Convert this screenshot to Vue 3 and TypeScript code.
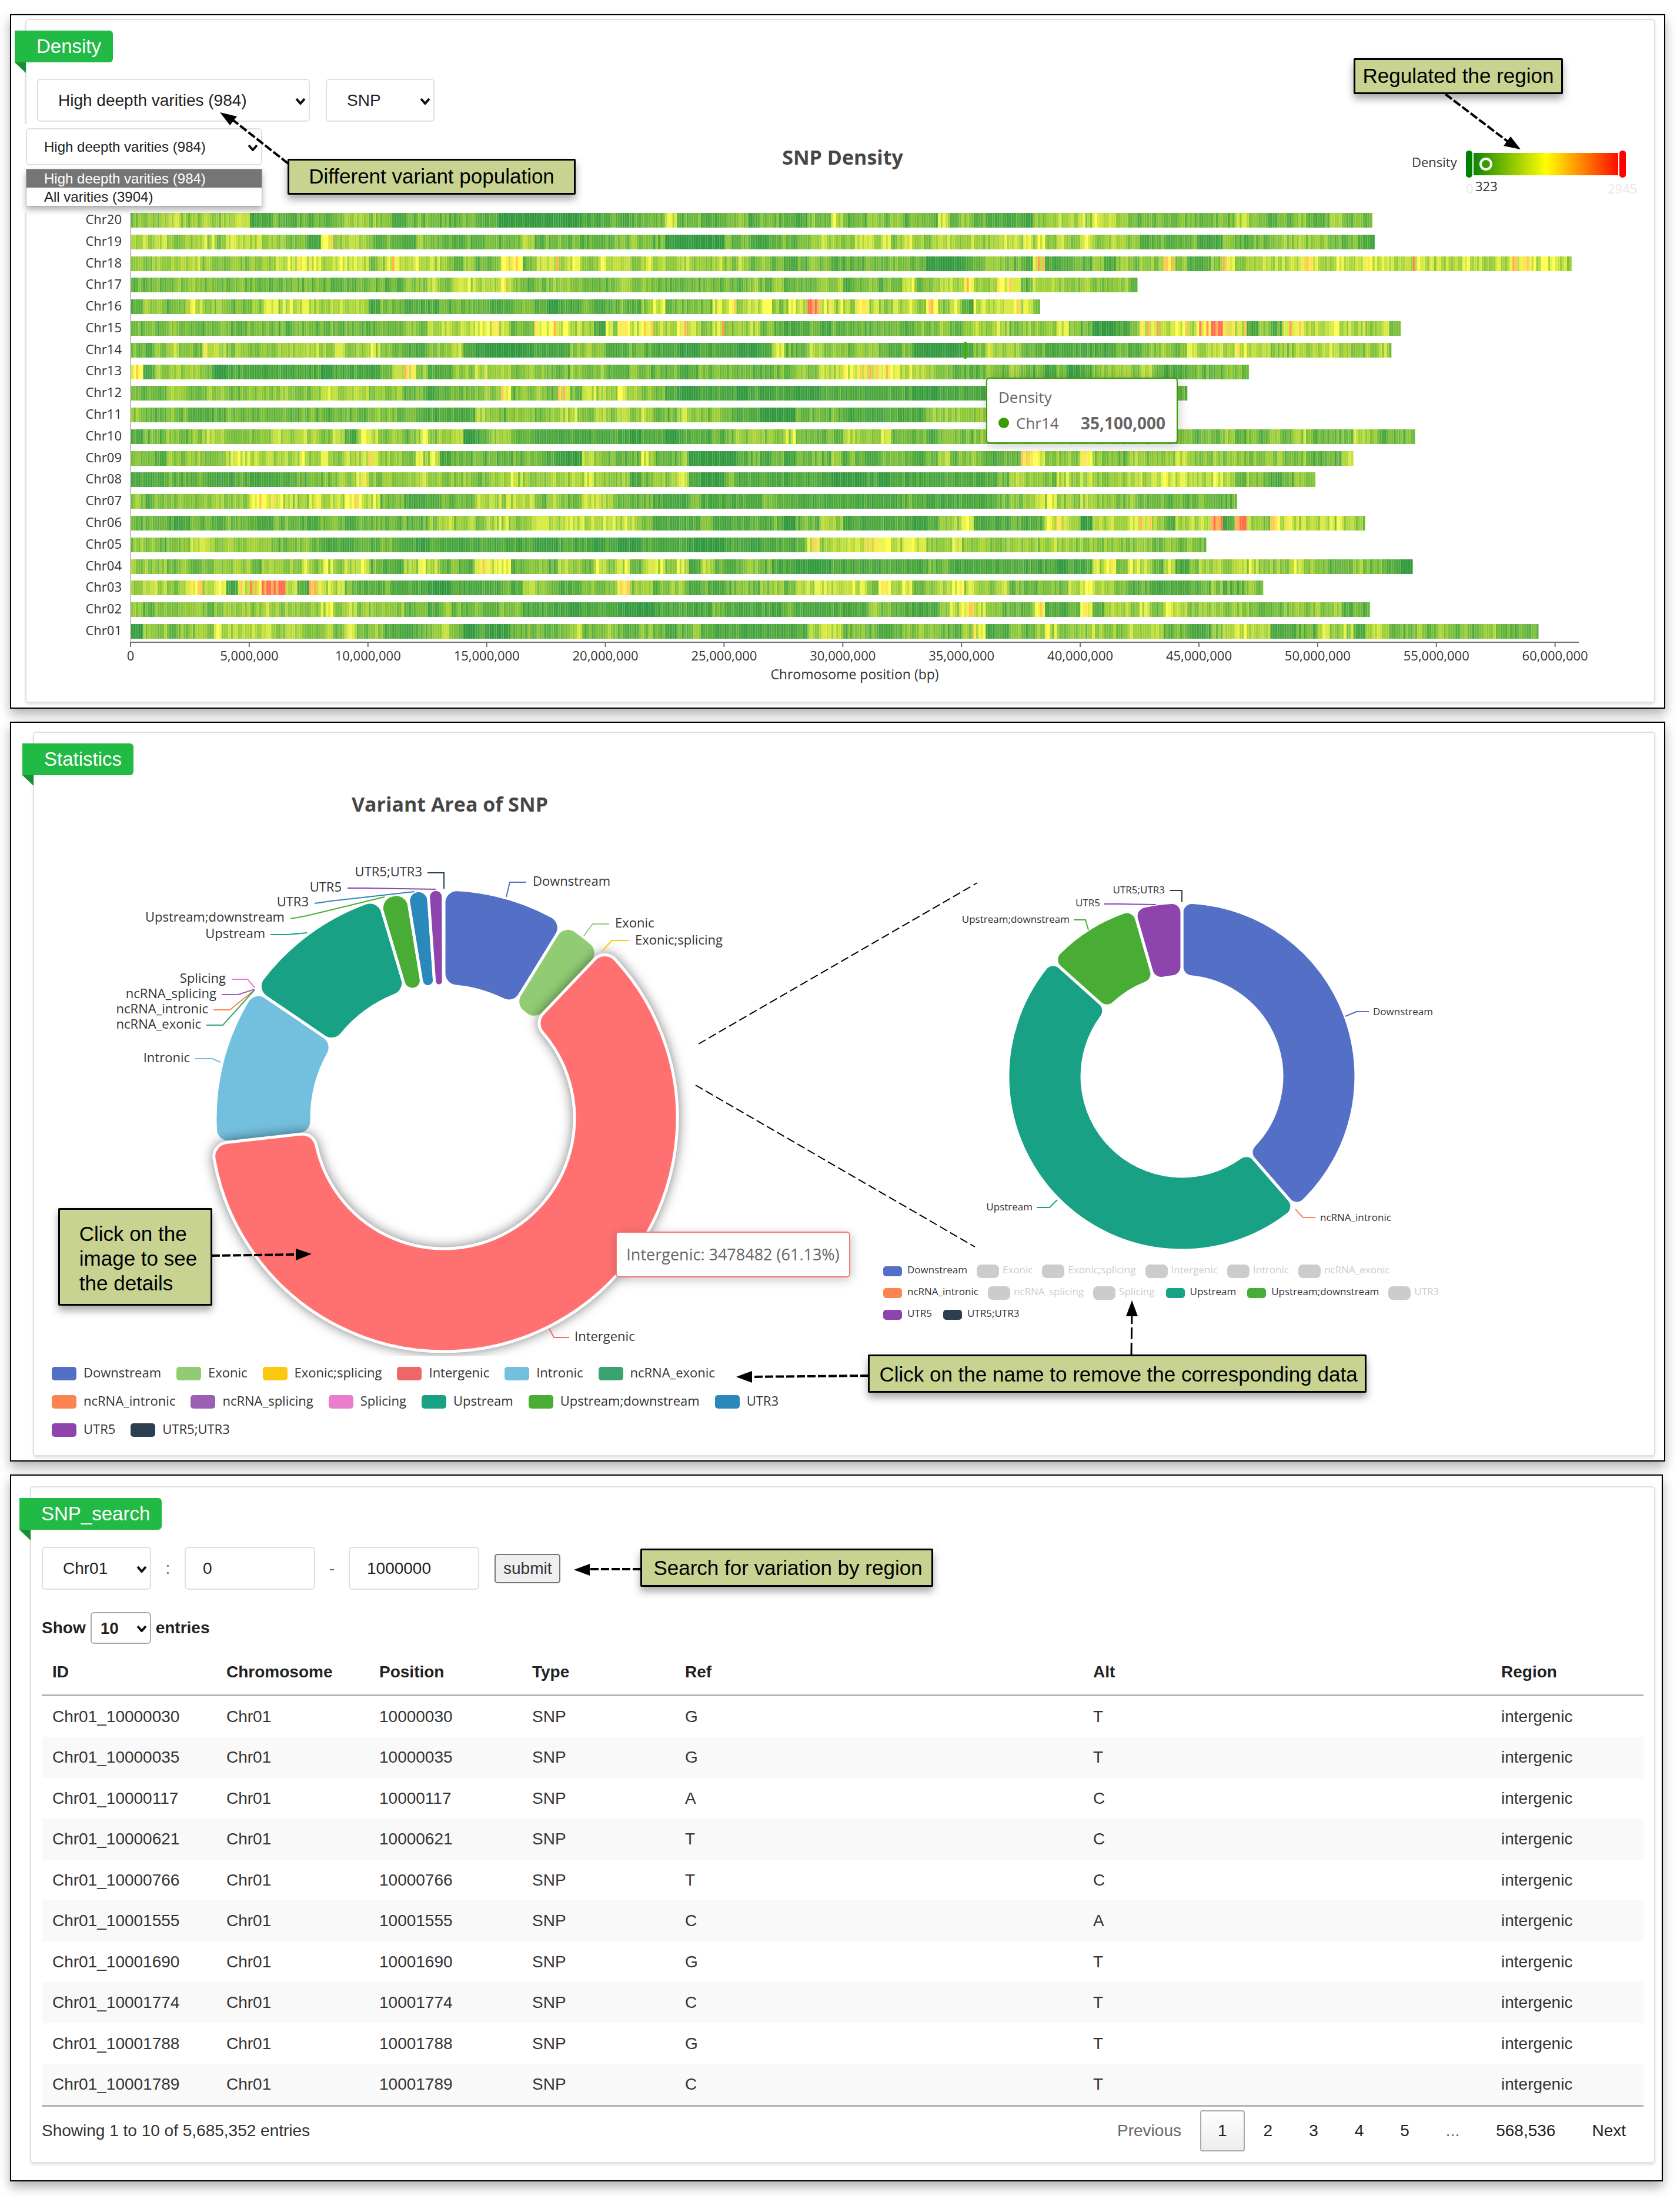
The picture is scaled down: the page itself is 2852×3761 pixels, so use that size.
<script setup lang="ts">
import { ref } from 'vue'

interface Chromosome { name: string; size: number; profile: string }
interface Slice { name: string; color: string; from: number; to: number }
interface Leader { name: string; color: string; points: string; x: number; y: number; side: 'start' | 'end' }
interface LegendItem { name: string; color: string; off?: boolean }

const population = ref('984')
const variant = ref('SNP')
const chromosome = ref('Chr01')
const regionStart = ref('0')
const regionEnd = ref('1000000')
const pageSize = ref('10')

/* One digit per 0.5 Mb window: 0 is sparse (dark green), 9 is dense (red). */
const chromosomes: Chromosome[] = [
  { name: 'Chr20', size: 523, profile: '3334335355 1121222233 3212222221 1000000011 2122252212 2313221325 2232322252 3211113344 5543222222 2225322232 23232' },
  { name: 'Chr19', size: 524, profile: '4443335354 4332216344 2221322122 2234222222 2232200000 2211222343 3645353343 4335455343 5344312122 1132223343 32221' },
  { name: 'Chr18', size: 607, profile: '3333443233 3345674555 3584553232 2662474535 4435434334 3423212322 2222322000 1233228112 2313233731 1373454567 4586654484 5454457656 43' },
  { name: 'Chr17', size: 424, profile: '2222332222 2222222222 2223343455 4632234322 2323222232 2232322233 1232252344 7436624433 43332' },
  { name: 'Chr16', size: 383, profile: '2332363322 3555544434 1321112222 1122101121 2213722225 6546354965 5653553735 1545652' },
  { name: 'Chr15', size: 535, profile: '2223222222 2222222222 2223244455 6522675431 5657447538 3342211212 2222213232 3435233353 2001278465 8976132864 4544343' },
  { name: 'Chr14', size: 531, profile: '2234327433 3333443433 5321133410 0000111333 1122110011 1001522433 2332120000 1343522111 1112123325 4436443344 4533342' },
  { name: 'Chr13', size: 471, profile: '6133332011 1111110111 1247311334 3423322323 2232221223 2222223245 6678654332 2232422120 1334342112 2232' },
  { name: 'Chr12', size: 445, profile: '2223323322 3333335544 3332212223 3623327255 3543210011 1010110011 1111110011 1111112222 222222232' },
  { name: 'Chr11', size: 390, profile: '3223211222 2222222222 3322111114 3233234524 3434224323 2110002222 1111111333 33322222' },
  { name: 'Chr10', size: 541, profile: '1223234333 3343443415 4332533401 3322111111 1101101112 2333352222 4335222132 2322223332 2222223222 2232223252 22243222' },
  { name: 'Chr09', size: 515, profile: '2213333355 4434535344 6332551222 2222210043 2225223000 0121212223 2212221242 3312265333 6332433343 3333333232 224' },
  { name: 'Chr08', size: 499, profile: '1112221112 1111222336 3333433332 3453343453 3312535100 2111111110 0010111111 1112433253 4333445554 4642321232' },
  { name: 'Chr07', size: 466, profile: '3232333333 6655364565 5221112224 4544242244 3222111211 1112211111 1111121111 1112334533 4332322222 222' },
  { name: 'Chr06', size: 520, profile: '2221122122 1122212212 2222234343 4534445555 5543111121 1121202243 1111110135 5111212573 0544574245 5919536644 4543' },
  { name: 'Chr05', size: 453, profile: '3323344343 4322321112 1211011111 1111001110 1001111000 1101112634 5566455335 3333333433 3333332323 2' },
  { name: 'Chr04', size: 540, profile: '3332322333 2333535345 2215542226 7623324325 3525535142 1232110001 1111111221 1111111101 1563642512 4434533353 22232210' },
  { name: 'Chr03', size: 477, profile: '3443565617 8995175521 1211100111 1214321133 3734233121 2323324554 5536352347 5434222324 5432121112 232232' },
  { name: 'Chr02', size: 522, profile: '3233332333 3433335343 3332313222 2231111011 1000111112 1111121111 1132211135 6532226112 6144352543 3433322333 33222' },
  { name: 'Chr01', size: 593, profile: '0332333544 4534334252 3211234201 0022222522 3223212321 1111111454 2321233322 3611323533 3533434221 1345441122 5351442232 323232222' },
]

const ramp: [number, number, number][] = [
  [47, 152, 60], [72, 166, 58], [106, 183, 58], [140, 199, 54], [174, 214, 54],
  [216, 234, 62], [255, 255, 72], [255, 200, 80], [255, 154, 76], [255, 106, 74],
]

function rampColor(level: number): string {
  const clamped = Math.max(0, Math.min(9, level))
  const low = Math.floor(clamped)
  const high = Math.min(9, low + 1)
  const t = clamped - low
  const mix = ramp[low].map((c, i) => Math.round(c + (ramp[high][i] - c) * t))
  return `rgb(${mix.join(',')})`
}

const plotHeight = 730
const barHeight = 25
const barPitch = 699 / 19

function buildBands() {
  let seed = 20
  const random = () => {
    seed = (seed * 1103515245 + 12345) % 2147483648
    return seed / 2147483648
  }
  const bands = new Map<number, string>()
  let seams = ''
  chromosomes.forEach((chr, row) => {
    const levels = chr.profile.replace(/ /g, '')
    const y = Math.round(row * barPitch)
    for (let cell = 0; cell < chr.size; cell++) {
      const base = Number(levels[Math.min(levels.length - 1, Math.floor(cell / 5))])
      const roll = random()
      const wobble = (random() - 0.5) * (base < 2 ? 1 : 2)
      let level = base + wobble
      if (base >= 9) level = roll < 0.65 ? 9 : 7.5
      else if (base >= 7) level = roll < 0.35 ? base + wobble / 2 : 5 + wobble
      else if (base >= 5 && roll < 0.3) level = base - 1.6 + wobble
      const key = Math.round(Math.max(0, Math.min(9, level)) * 2)
      bands.set(key, `${bands.get(key) ?? ''}M${cell} ${y}h1.05v${barHeight}h-1.05z`)
      seams += `M${cell + 0.8} ${y}h.25v${barHeight}h-.25z`
    }
  })
  return { bands: [...bands].map(([key, d]) => ({ d, color: rampColor(key / 2) })), seams }
}
const { bands, seams } = buildBands()

const ticks = Array.from({ length: 13 }, (_, i) => ({
  at: `${(i * 500) / 6.1 / 10}%`,
  label: (i * 5000000).toLocaleString('en-US'),
}))
const chr14Y = Math.round(6 * barPitch)

/* Annular sector with rounded corners, angles in degrees clockwise from twelve o'clock. */
function sector(cx: number, cy: number, inner: number, outer: number, from: number, to: number, radius: number): string {
  const a = (from * Math.PI) / 180
  const b = (to * Math.PI) / 180
  const s = Math.sin(Math.min(Math.PI, b - a) / 2) * 0.999
  const co = Math.min(radius, (outer * s) / (1 + s))
  const ci = s < 0.9 ? Math.min(radius, (inner * s) / (1 - s)) : radius
  const dOut = Math.asin(co / (outer - co))
  const dIn = Math.asin(ci / (inner + ci))
  const rOut = Math.sqrt((outer - co) ** 2 - co ** 2)
  const rIn = Math.sqrt((inner + ci) ** 2 - ci ** 2)
  const at = (r: number, t: number) => `${(cx + r * Math.sin(t)).toFixed(1)} ${(cy - r * Math.cos(t)).toFixed(1)}`
  const bigOut = b - a - 2 * dOut > Math.PI ? 1 : 0
  const bigIn = b - a - 2 * dIn > Math.PI ? 1 : 0
  return [
    `M${at(rIn, a)}L${at(rOut, a)}`,
    `A${co} ${co} 0 0 1 ${at(outer, a + dOut)}`,
    `A${outer} ${outer} 0 ${bigOut} 1 ${at(outer, b - dOut)}`,
    `A${co} ${co} 0 0 1 ${at(rOut, b)}`,
    `L${at(rIn, b)}`,
    `A${ci} ${ci} 0 0 1 ${at(inner, b - dIn)}`,
    `A${inner} ${inner} 0 ${bigIn} 0 ${at(inner, a + dIn)}`,
    `A${ci} ${ci} 0 0 1 ${at(rIn, a)}Z`,
  ].join('')
}

const areaSlices: Slice[] = [
  { name: 'Downstream', color: '#5470c6', from: 0, to: 31.6 },
  { name: 'Exonic', color: '#91cc75', from: 31.6, to: 43.5 },
  { name: 'Intronic', color: '#73c0de', from: 263.6, to: 304.2 },
  { name: 'Upstream', color: '#19a186', from: 304.2, to: 343.4 },
  { name: 'Upstream;downstream', color: '#49ac34', from: 343.4, to: 350.7 },
  { name: 'UTR3', color: '#2a88bb', from: 350.7, to: 356 },
  { name: 'UTR5', color: '#8e44ad', from: 356, to: 359.8 },
]
const activeSlice = sector(755, 1901, 222, 397, 43.5, 263.6, 24)

const areaLeaders: Leader[] = [
  { name: 'Downstream', color: '#5470c6', points: '861,1525 867,1500 895,1500', x: 906, y: 1506, side: 'start' },
  { name: 'Exonic', color: '#91cc75', points: '993,1591 1008,1571 1036,1571', x: 1046, y: 1577, side: 'start' },
  { name: 'Exonic;splicing', color: '#fac810', points: '1023,1618 1041,1599 1070,1599', x: 1080, y: 1606, side: 'start' },
  { name: 'UTR5;UTR3', color: '#2c3e50', points: '727,1484 755,1484 755,1511', x: 718, y: 1490, side: 'end' },
  { name: 'UTR5', color: '#8e44ad', points: '591,1510 620,1510 741,1512', x: 581, y: 1516, side: 'end' },
  { name: 'UTR3', color: '#2a88bb', points: '535,1536 563,1532 705,1516', x: 525, y: 1541, side: 'end' },
  { name: 'Upstream;downstream', color: '#49ac34', points: '494,1562 522,1557 654,1525', x: 484, y: 1567, side: 'end' },
  { name: 'Upstream', color: '#19a186', points: '460,1589 490,1589 522,1586', x: 451, y: 1595, side: 'end' },
  { name: 'Splicing', color: '#ea7ccc', points: '394,1665 421,1665 433,1679', x: 384, y: 1671, side: 'end' },
  { name: 'ncRNA_splicing', color: '#9a60b4', points: '377,1691 405,1691 433,1682', x: 368, y: 1697, side: 'end' },
  { name: 'ncRNA_intronic', color: '#fc8452', points: '363,1717 391,1717 433,1683', x: 354, y: 1723, side: 'end' },
  { name: 'ncRNA_exonic', color: '#3ba272', points: '351,1743 379,1743 433,1683', x: 342, y: 1749, side: 'end' },
  { name: 'Intronic', color: '#73c0de', points: '332,1800 361,1800 375,1806', x: 323, y: 1806, side: 'end' },
  { name: 'Intergenic', color: '#ee6666', points: '934,2259 942,2274 968,2274', x: 977, y: 2280, side: 'start' },
]

const filteredSlices: Slice[] = [
  { name: 'Downstream', color: '#5470c6', from: 0, to: 139 },
  { name: 'Upstream', color: '#19a186', from: 139, to: 311.8 },
  { name: 'Upstream;downstream', color: '#49ac34', from: 311.8, to: 343.9 },
  { name: 'UTR5', color: '#8e44ad', from: 343.9, to: 360 },
]
const filteredLeaders: Leader[] = [
  { name: 'Downstream', color: '#5470c6', points: '2288,1728 2307,1720 2328,1720', x: 2335, y: 1726, side: 'start' },
  { name: 'ncRNA_intronic', color: '#fc8452', points: '2203,2056 2216,2070 2237,2070', x: 2245, y: 2076, side: 'start' },
  { name: 'Upstream', color: '#19a186', points: '1763,2053 1785,2053 1798,2040', x: 1756, y: 2058, side: 'end' },
  { name: 'Upstream;downstream', color: '#49ac34', points: '1826,1564 1846,1564 1851,1581', x: 1819, y: 1569, side: 'end' },
  { name: 'UTR5', color: '#8e44ad', points: '1878,1537 1900,1537 1966,1538', x: 1871, y: 1541, side: 'end' },
  { name: 'UTR5;UTR3', color: '#2c3e50', points: '1989,1514 2010,1514 2010,1534', x: 1981, y: 1519, side: 'end' },
]

const areaLegend: LegendItem[][] = [
  [
    { name: 'Downstream', color: '#5470c6' }, { name: 'Exonic', color: '#91cc75' }, { name: 'Exonic;splicing', color: '#fac810' },
    { name: 'Intergenic', color: '#ee6666' }, { name: 'Intronic', color: '#73c0de' }, { name: 'ncRNA_exonic', color: '#3ba272' },
  ],
  [
    { name: 'ncRNA_intronic', color: '#fc8452' }, { name: 'ncRNA_splicing', color: '#9a60b4' }, { name: 'Splicing', color: '#ea7ccc' },
    { name: 'Upstream', color: '#19a186' }, { name: 'Upstream;downstream', color: '#49ac34' }, { name: 'UTR3', color: '#2a88bb' },
  ],
  [{ name: 'UTR5', color: '#8e44ad' }, { name: 'UTR5;UTR3', color: '#2c3e50' }],
]
const kept = ['Downstream', 'ncRNA_intronic', 'Upstream', 'Upstream;downstream', 'UTR5', 'UTR5;UTR3']
const filteredLegend: LegendItem[][] = areaLegend.map(row => row.map(item => ({ ...item, off: !kept.includes(item.name) })))

const columns = ['ID', 'Chromosome', 'Position', 'Type', 'Ref', 'Alt', 'Region']
const variants = [
  ['10000030', 'G', 'T'], ['10000035', 'G', 'T'], ['10000117', 'A', 'C'], ['10000621', 'T', 'C'], ['10000766', 'T', 'C'],
  ['10001555', 'C', 'A'], ['10001690', 'G', 'T'], ['10001774', 'C', 'T'], ['10001788', 'G', 'T'], ['10001789', 'C', 'T'],
].map(([position, base, alt]) => [`Chr01_${position}`, 'Chr01', position, 'SNP', base, alt, 'intergenic'])
</script>

<template>
  <main class="page">
    <section class="panel panel-density">
      <div class="card">
        <h1 class="ribbon">Density</h1>

        <div class="controls">
          <span class="select-box population">
            <select v-model="population" class="select" aria-label="Population">
              <option value="984">High deepth varities (984)</option>
              <option value="3904">All varities (3904)</option>
            </select>
            <svg class="chevron" viewBox="0 0 18 12"><path d="M2 2l7 8 7-8" /></svg>
          </span>
          <span class="select-box variant">
            <select v-model="variant" class="select" aria-label="Variant type">
              <option>SNP</option>
              <option>INDEL</option>
            </select>
            <svg class="chevron" viewBox="0 0 18 12"><path d="M2 2l7 8 7-8" /></svg>
          </span>
        </div>

        <div class="dropdown">
          <span class="select-box small">
            <select v-model="population" class="select" aria-label="Population list">
              <option value="984">High deepth varities (984)</option>
              <option value="3904">All varities (3904)</option>
            </select>
            <svg class="chevron" viewBox="0 0 18 12"><path d="M2 2l7 8 7-8" /></svg>
          </span>
          <ul class="options">
            <li class="chosen">High deepth varities (984)</li>
            <li>All varities (3904)</li>
          </ul>
        </div>

        <div class="chart-head">
          <h2 class="chart-title">SNP Density</h2>
          <svg class="visual-map" viewBox="2395 244 400 90" width="400" height="90">
            <defs>
              <linearGradient id="heat">
                <stop offset="0" stop-color="#0c8600" />
                <stop offset=".5" stop-color="#ffff00" />
                <stop offset="1" stop-color="#ff0c00" />
              </linearGradient>
            </defs>
            <text x="2401" y="284" class="map-text">Density</text>
            <rect x="2506" y="260" width="246" height="38" fill="url(#heat)" />
            <rect x="2493" y="256" width="11" height="46" rx="5" fill="#008000" />
            <rect x="2754" y="256" width="11" height="46" rx="5" fill="#ff0000" />
            <circle cx="2527" cy="279" r="9" fill="#379b00" stroke="#fff" stroke-width="4" />
            <text x="2493" y="329" class="map-text faint">0</text>
            <text x="2734" y="329" class="map-text faint">2945</text>
            <text x="2509" y="325" class="map-text">323</text>
          </svg>
        </div>

        <div class="plot">
          <ul class="plot-labels">
            <li v-for="chr in chromosomes" :key="chr.name">{{ chr.name }}</li>
          </ul>
          <div class="plot-area">
            <svg class="bars" :viewBox="`0 0 610 ${plotHeight}`" preserveAspectRatio="none">
              <path v-for="band in bands" :key="band.color" :d="band.d" :fill="band.color" />
              <path :d="seams" fill="#fff" fill-opacity=".25" />
              <rect x="351" :y="chr14Y - 2" width="1" :height="barHeight + 4" fill="#3fa80c" />
            </svg>
            <svg class="axis">
              <line x1="0" x2="100%" y1="2" y2="2" />
              <g v-for="tick in ticks" :key="tick.label">
                <line :x1="tick.at" :x2="tick.at" y1="2" y2="10" />
                <text :x="tick.at" y="33">{{ tick.label }}</text>
              </g>
              <text class="axis-name" x="50%" y="65">Chromosome position (bp)</text>
            </svg>
          </div>
        </div>

        <div class="tooltip tip-density">
          <div>Density</div>
          <div class="tip-row"><i class="dot"></i><span>Chr14</span><b>35,100,000</b></div>
        </div>

        <svg class="notes" viewBox="45 34 2768 1161">
          <path class="dash" d="M490 278L396 204" />
          <path d="M374 191L403 198L391 213Z" />
          <path class="dash" d="M2458 160L2566 242" />
          <path d="M2586 254L2569 232L2557 248Z" />
        </svg>
        <p class="callout note-population">Different variant population</p>
        <p class="callout note-region">Regulated the region</p>
      </div>
    </section>

    <section class="panel panel-statistics">
      <div class="card">
        <h1 class="ribbon ribbon-over">Statistics</h1>
        <div class="donuts">
          <div class="donut-main">
            <h2 class="chart-title">Variant Area of SNP</h2>
            <svg class="donut" viewBox="58 1460 1394 846">
              <path
                v-for="slice in areaSlices" :key="slice.name" class="slice"
                :d="sector(755, 1901, 225, 389, slice.from, slice.to, 22)" :fill="slice.color"
              />
              <path class="slice lifted" :d="activeSlice" fill="#ff7070" />
              <g v-for="leader in areaLeaders" :key="leader.name">
                <polyline :points="leader.points" :stroke="leader.color" />
                <text :x="leader.x" :y="leader.y" :text-anchor="leader.side">{{ leader.name }}</text>
              </g>
            </svg>
            <div class="legend">
              <div v-for="(row, i) in areaLegend" :key="i" class="legend-row">
                <span v-for="item in row" :key="item.name" class="legend-item">
                  <i class="swatch" :style="{ background: item.color }"></i>{{ item.name }}
                </span>
              </div>
            </div>
          </div>
          <div class="donut-side">
            <svg class="donut compact" viewBox="1452 1490 1361 645">
              <path
                v-for="slice in filteredSlices" :key="slice.name" class="slice"
                :d="sector(2010, 1830, 170, 296, slice.from, slice.to, 17)" :fill="slice.color"
              />
              <g v-for="leader in filteredLeaders" :key="leader.name">
                <polyline :points="leader.points" :stroke="leader.color" />
                <text :x="leader.x" :y="leader.y" :text-anchor="leader.side">{{ leader.name }}</text>
              </g>
            </svg>
            <div class="legend compact">
              <div v-for="(row, i) in filteredLegend" :key="i" class="legend-row">
                <span v-for="item in row" :key="item.name" class="legend-item" :class="{ off: item.off }">
                  <i class="swatch" :style="item.off ? undefined : { background: item.color }"></i>{{ item.name }}
                </span>
              </div>
            </div>
          </div>
        </div>

        <div class="tooltip tip-slice">Intergenic: 3478482 (61.13%)</div>

        <svg class="notes" viewBox="58 1246 2755 1228">
          <path class="thin" d="M1188 1775L1662 1501M1183 1845L1658 2120" />
          <path class="dash" d="M360 2135L505 2133" />
          <path d="M530 2132L503 2123V2143Z" />
          <path class="dash" d="M1477 2339L1277 2341" />
          <path d="M1252 2341L1279 2331V2351Z" />
          <path class="dash long" d="M1924 2303L1925 2236" />
          <path d="M1925 2211L1915 2238H1935Z" />
        </svg>
        <p class="callout note-image">Click on the<br>image to see<br>the details</p>
        <p class="callout note-legend">Click on the name to remove the corresponding data</p>
      </div>
    </section>

    <section class="panel panel-search">
      <div class="card">
        <h1 class="ribbon">SNP_search</h1>
        <form class="search" @submit.prevent>
          <span class="select-box chromosome">
            <select v-model="chromosome" class="select" aria-label="Chromosome">
              <option v-for="chr in [...chromosomes].reverse()" :key="chr.name">{{ chr.name }}</option>
            </select>
            <svg class="chevron" viewBox="0 0 18 12"><path d="M2 2l7 8 7-8" /></svg>
          </span>
          <span class="separator">:</span>
          <input v-model="regionStart" class="field" type="text" aria-label="Region start">
          <span class="separator">-</span>
          <input v-model="regionEnd" class="field" type="text" aria-label="Region end">
          <button class="submit" type="submit">submit</button>
        </form>

        <label class="length">
          Show
          <span class="select-box count">
            <select v-model="pageSize" class="select">
              <option>10</option>
              <option>25</option>
              <option>50</option>
            </select>
            <svg class="chevron" viewBox="0 0 18 12"><path d="M2 2l7 8 7-8" /></svg>
          </span>
          entries
        </label>

        <table class="results">
          <colgroup>
            <col class="col-id"><col class="col-fixed"><col class="col-fixed"><col class="col-fixed"><col><col><col class="col-fixed">
          </colgroup>
          <thead>
            <tr><th v-for="column in columns" :key="column" scope="col">{{ column }}</th></tr>
          </thead>
          <tbody>
            <tr v-for="row in variants" :key="row[0]">
              <td v-for="(cell, i) in row" :key="i">{{ cell }}</td>
            </tr>
          </tbody>
        </table>

        <div class="table-foot">
          <span>Showing 1 to 10 of 5,685,352 entries</span>
          <nav class="pages" aria-label="Pages">
            <button class="page-button" type="button" disabled>Previous</button>
            <button class="page-button current" type="button">1</button>
            <button v-for="n in [2, 3, 4, 5]" :key="n" class="page-button" type="button">{{ n }}</button>
            <span class="page-button gap">...</span>
            <button class="page-button" type="button">568,536</button>
            <button class="page-button" type="button">Next</button>
          </nav>
        </div>

        <svg class="notes" viewBox="53 2528 2760 1145">
          <path class="dash" d="M1090 2667L1001 2667" />
          <path d="M976 2668L1003 2658V2678Z" />
        </svg>
        <p class="callout note-search">Search for variation by region</p>
      </div>
    </section>
  </main>
</template>

<style>
body {
  margin: 0;
  background: #fff;
}
</style>

<style scoped>
* {
  box-sizing: border-box;
}

.page {
  display: flex;
  flex-direction: column;
  gap: 22px;
  padding: 24px 20px 52px 17px;
  font: 28px "Liberation Sans", Arial, sans-serif;
  color: #333;
}

h1, h2, p, ul {
  margin: 0;
  padding: 0;
  list-style: none;
}

.panel {
  border: 2px solid #000;
  background: #fff;
  box-shadow: 0 10px 18px rgba(0, 0, 0, .3);
}
.panel-density { padding: 6px 15px 8px 24px; }
.panel-statistics { padding: 15px 15px 7px 37px; }
.panel-search { padding: 18px 11px 29px 32px; margin-right: 4px; }

.card {
  position: relative;
  padding-top: 18px;
  border: 2px solid #dedfdf;
  border-radius: 6px;
  box-shadow: 0 3px 4px rgba(34, 36, 38, .12);
}
.panel-density .card { padding-bottom: 35px; }
.panel-search .card { padding-bottom: 18px; }

.ribbon {
  position: relative;
  width: fit-content;
  height: 54px;
  margin-left: -20px;
  padding: 0 20px 0 37px;
  border-radius: 0 6px 6px 0;
  background: #21ba45;
  color: #fff;
  font-size: 33px;
  font-weight: 400;
  line-height: 54px;
}
.ribbon::after {
  content: "";
  position: absolute;
  left: 0;
  top: 100%;
  border-top: 18px solid #198f35;
  border-left: 19px solid transparent;
}

/* Form controls */
.controls {
  display: flex;
  gap: 27px;
  margin: 28px 0 0 18px;
}
.select-box {
  position: relative;
  display: inline-block;
}
.select, .field {
  width: 100%;
  height: 73px;
  padding: 0 34px;
  border: 2px solid #dedfdf;
  border-radius: 6px;
  background: #fff;
  color: #222;
  font: inherit;
  appearance: none;
}
.chevron {
  position: absolute;
  right: 7px;
  top: 50%;
  width: 18px;
  height: 12px;
  margin-top: -5px;
  fill: none;
  stroke: #111;
  stroke-width: 4;
  pointer-events: none;
}
.population { width: 464px; }
.variant { width: 185px; }

.dropdown {
  position: absolute;
  left: -12px;
  top: 177px;
  width: 422px;
  height: 151px;
  padding: 7px 9px 0 11px;
  background: #fff;
  font-size: 24px;
}
.small { width: 100%; }
.small .select {
  height: 63px;
  padding: 0 29px;
}
.options {
  margin-top: 6px;
  border: 1px solid #aaa;
  background: #fff;
  box-shadow: 0 6px 10px rgba(0, 0, 0, .3);
  line-height: 31px;
  color: #222;
}
.options li { padding-left: 30px; }
.options .chosen {
  background: #757575;
  color: #fff;
}

/* Density chart */
.chart-title {
  font: 700 34px/46px "Open Sans", "Noto Sans", sans-serif;
  color: #464646;
  text-align: center;
}
.chart-head {
  display: grid;
  grid-template-columns: 1fr auto 1fr;
  margin: 37px 18px 0 26px;
}
.chart-head .chart-title { grid-column: 2; }
.visual-map { justify-self: end; }
.map-text {
  font: 22px "Open Sans", "Noto Sans", sans-serif;
  fill: #333;
}
.faint { fill: #e8e8e8; }

.plot {
  display: flex;
  gap: 15px;
  margin: 28px 128px 0 0;
  font: 22px/25px "Open Sans", "Noto Sans", sans-serif;
}
.plot-labels {
  display: flex;
  flex-direction: column;
  justify-content: space-between;
  width: 162px;
  height: 724px;
  margin-top: -2px;
  text-align: right;
}
.plot-area { flex: 1; }
.bars {
  display: block;
  width: 100%;
  height: 730px;
  border-left: 1px solid #6e7079;
}
.axis {
  display: block;
  width: 100%;
  height: 68px;
  margin-top: -2px;
  overflow: visible;
}
.axis line {
  stroke: #6e7079;
  stroke-width: 2;
}
.axis text {
  text-anchor: middle;
  fill: #333;
}
.axis .axis-name { font-size: 23px; }

.tooltip {
  position: absolute;
  border: 2px solid #389c0a;
  border-radius: 6px;
  background: #fff;
  box-shadow: 2px 4px 18px rgba(0, 0, 0, .22);
  color: #666;
  font: 26px/44px "Open Sans", "Noto Sans", sans-serif;
  white-space: nowrap;
}
.tip-density {
  left: 1632px;
  top: 608px;
  width: 326px;
  padding: 9px 19px 11px;
}
.tip-row {
  display: flex;
  align-items: center;
}
.tip-row b {
  margin-left: auto;
  font-size: 28px;
}
.dot {
  width: 18px;
  height: 18px;
  margin-right: 12px;
  border-radius: 50%;
  background: #389c0a;
}

/* Donuts */
.ribbon-over {
  margin-bottom: -72px;
}
.donuts {
  display: grid;
  grid-template-columns: 1394fr 1361fr;
}
.donut-main { padding: 98px 0 30px; }
.donut-main .chart-title { padding-left: 20px; }
.donut-side { padding-top: 244px; }
.donut {
  display: block;
  width: 100%;
  font: 22px "Open Sans", "Noto Sans", sans-serif;
  fill: #333;
}
.donut-main .donut { margin-top: 70px; }
.donut.compact { font-size: 17px; }
.slice {
  stroke: #fff;
  stroke-width: 5;
}
.lifted { filter: drop-shadow(0 0 10px rgba(0, 0, 0, .5)); }
.donut polyline {
  fill: none;
  stroke-width: 2;
}
.legend {
  display: flex;
  flex-direction: column;
  gap: 18px;
  margin: 12px 0 0 30px;
  font: 22px/30px "Open Sans", "Noto Sans", sans-serif;
}
.legend-row {
  display: flex;
  gap: 26px;
}
.legend-item {
  display: flex;
  align-items: center;
}
.swatch {
  width: 42px;
  height: 23px;
  margin: 5px 12px 0 0;
  border-radius: 5px;
}
.legend.compact {
  gap: 13px;
  margin: 12px 0 0 50px;
  font-size: 17px;
  line-height: 24px;
}
.compact .legend-row { gap: 19px; }
.compact .swatch {
  width: 32px;
  height: 17px;
  margin-right: 9px;
}
.off { color: #ccc; }
.off .swatch {
  background: #ccc;
  box-shadow: 0 0 0 3px #ccc;
}
.tip-slice {
  left: 989px;
  top: 848px;
  width: 399px;
  padding: 15px 0;
  border-color: #f07878;
  font-size: 27px;
  text-align: center;
}

/* Annotations */
.notes {
  position: absolute;
  inset: 0;
  width: 100%;
  pointer-events: none;
}
.notes .dash {
  stroke: #000;
  stroke-width: 4;
  stroke-dasharray: 14 4;
}
.notes .long {
  stroke-width: 3;
  stroke-dasharray: 20 6;
}
.notes .thin {
  stroke: #000;
  stroke-width: 2;
  stroke-dasharray: 14 6;
}
.callout {
  position: absolute;
  display: flex;
  align-items: center;
  justify-content: center;
  height: 61px;
  padding-bottom: 2px;
  border: 3px solid #000;
  border-radius: 2px;
  background: #c8d392;
  box-shadow: 0 8px 14px rgba(0, 0, 0, .35);
  color: #000;
  font-size: 35px;
  line-height: 42px;
  white-space: nowrap;
}
.note-population { left: 444px; top: 236px; width: 490px; }
.note-region { left: 2257px; top: 65px; width: 356px; }
.note-image {
  left: 41px;
  top: 808px;
  width: 262px;
  height: 166px;
  padding: 6px 0 0 10px;
}
.note-legend { left: 1418px; top: 1057px; width: 848px; height: 65px; padding: 2px 0 0 4px; }
.note-search { left: 1036px; top: 104px; width: 498px; height: 65px; padding: 0 0 0 4px; }

/* Search */
.search {
  display: flex;
  align-items: center;
  margin: 29px 0 0 18px;
}
.chromosome { width: 186px; }
.field {
  width: 222px;
  padding: 0 29px;
}
.separator {
  width: 57px;
  text-align: center;
  color: #666;
}
.submit {
  height: 50px;
  margin-left: 26px;
  padding: 0 13px;
  border: 2px solid #767676;
  border-radius: 5px;
  background: #efefef;
  color: #333;
  font: inherit;
}
.length {
  display: flex;
  align-items: center;
  gap: 8px;
  width: fit-content;
  margin: 38px 0 0 18px;
  color: #222;
  font-weight: 700;
}
.count { width: 103px; }
.count .select {
  height: 54px;
  padding: 0 15px;
  border-color: #aaa;
}

.results {
  width: calc(100% - 36px);
  margin: 12px 18px 0;
  border-collapse: separate;
  border-spacing: 0;
  border-bottom: 3px solid #b4b4b4;
  table-layout: fixed;
  text-align: left;
}
.col-id { width: 296px; }
.col-fixed { width: 260px; }
.results th, .results td {
  height: 69px;
  padding: 0 18px;
}
.results th {
  height: 77px;
  padding-bottom: 3px;
  border-bottom: 3px solid #b4b4b4;
  color: #222;
}
.results tbody tr:nth-child(even) td {
  height: 70px;
  background: #f9f9f9;
}

.table-foot {
  display: flex;
  align-items: center;
  justify-content: space-between;
  margin: 6px 18px 0;
}
.pages {
  display: flex;
  gap: 2px;
}
.page-button {
  height: 70px;
  padding: 0 28px;
  border: 2px solid transparent;
  border-radius: 4px;
  background: none;
  color: #222;
  font: inherit;
  line-height: 66px;
}
.page-button:disabled, .gap { color: #666; }
.current {
  border-color: #aaa;
  background: linear-gradient(#fff, #ededed);
}
</style>
